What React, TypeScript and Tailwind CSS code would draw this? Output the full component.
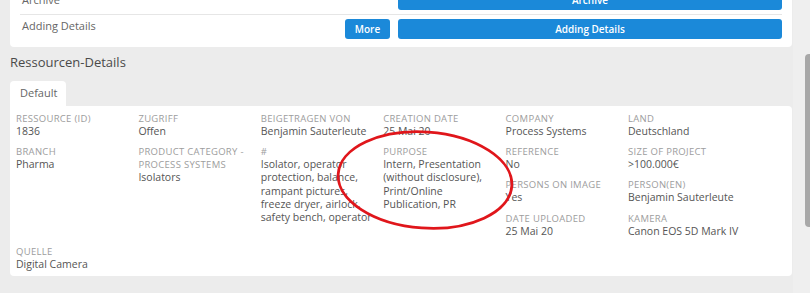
import React from "react";

type Field = { label: string; value: string };

const columns: Field[][] = [
  [
    { label: "Ressource (ID)", value: "1836" },
    { label: "Branch", value: "Pharma" },
  ],
  [
    { label: "Zugriff", value: "Offen" },
    { label: "Product Category - Process Systems", value: "Isolators" },
  ],
  [
    { label: "Beigetragen von", value: "Benjamin Sauterleute" },
    {
      label: "#",
      value:
        "Isolator, operator protection, balance, rampant pictures, freeze dryer, airlock, safety bench, operator",
    },
  ],
  [
    { label: "Creation Date", value: "25 Mai 20" },
    {
      label: "Purpose",
      value: "Intern, Presentation (without disclosure), Print/Online Publication, PR",
    },
  ],
  [
    { label: "Company", value: "Process Systems" },
    { label: "Reference", value: "No" },
    { label: "Persons on image", value: "Yes" },
    { label: "Date uploaded", value: "25 Mai 20" },
  ],
  [
    { label: "Land", value: "Deutschland" },
    { label: "Size of project", value: ">100.000€" },
    { label: "Person(en)", value: "Benjamin Sauterleute" },
    { label: "Kamera", value: "Canon EOS 5D Mark IV" },
  ],
  [{ label: "Quelle", value: "Digital Camera" }],
];

function FieldView({ f }: { f: Field }) {
  return (
    <div className="mb-[7px]">
      <div className="text-[9.5px] leading-[13px] uppercase tracking-[0.3px] text-[#9d9d9d]">
        {f.label}
      </div>
      <div className="text-[10.5px] leading-[13.2px] text-[#555]">{f.value}</div>
    </div>
  );
}

export default function App() {
  return (
    <div
      className="relative h-[293px] w-[810px] overflow-hidden bg-[#ececec]"
      style={{ fontFamily: '"Open Sans", "Noto Sans", sans-serif' }}
    >
      <div className="flex h-full">
        <div className="w-[793px] pl-[10px] pr-[1px]">
          {/* top card */}
          <div className="-mt-[17px] rounded-[4px] bg-white px-[10px] pt-[7px] pb-[8px]">
            <div className="flex items-center border-b border-[#e6e6e6] pb-[4px]">
              <div className="flex-1 pl-[2px] text-[11px] text-[#666]">Archive</div>
              <button className="h-[20px] w-[384px] rounded-[3px] bg-[#1b89d9] text-[10px] font-semibold text-white">
                Archive
              </button>
            </div>
            <div className="flex items-start pt-[4px]">
              <div className="flex-1 pl-[2px] text-[11px] leading-[14px] text-[#666]">
                Adding Details
              </div>
              <button className="mr-[8px] h-[20px] w-[45px] rounded-[3px] bg-[#1b89d9] text-[10px] font-semibold text-white">
                More
              </button>
              <button className="h-[20px] w-[384px] rounded-[3px] bg-[#1b89d9] text-[10px] font-semibold text-white">
                Adding Details
              </button>
            </div>
          </div>

          {/* heading */}
          <div className="mt-[7px] text-[13px] leading-[16px] text-[#4a4a4a]">
            Ressourcen-Details
          </div>

          {/* tab */}
          <div className="mt-[11px] flex">
            <div className="h-[25px] w-[56px] rounded-t-[4px] bg-white pl-[10px] pt-[5px] text-[11px] leading-[14px] text-[#666]">
              Default
            </div>
          </div>

          {/* content card */}
          <div className="h-[170px] rounded-b-[4px] rounded-tr-[4px] bg-white px-[6px] pt-[6px]">
            <div className="grid grid-cols-[repeat(6,122.4px)]">
              {columns.map((col, i) => (
                <div key={i} className="pr-[6px]">
                  {col.map((f, j) => (
                    <FieldView key={j} f={f} />
                  ))}
                </div>
              ))}
            </div>
          </div>
        </div>

        {/* scrollbar */}
        <div className="relative w-[17px] bg-[#efefef]">
          <div className="absolute left-[12px] top-[54px] h-[173px] w-[8px] rounded-[4px] bg-[#a8a8a8]" />
        </div>
      </div>

      {/* red annotation ellipse */}
      <svg
        className="pointer-events-none absolute left-0 top-0"
        width="810"
        height="293"
        viewBox="0 0 810 293"
      >
        <ellipse
          cx="425"
          cy="180"
          rx="87"
          ry="48"
          transform="rotate(4 425 180)"
          fill="none"
          stroke="#e0161b"
          strokeWidth="2.8"
        />
      </svg>
    </div>
  );
}
